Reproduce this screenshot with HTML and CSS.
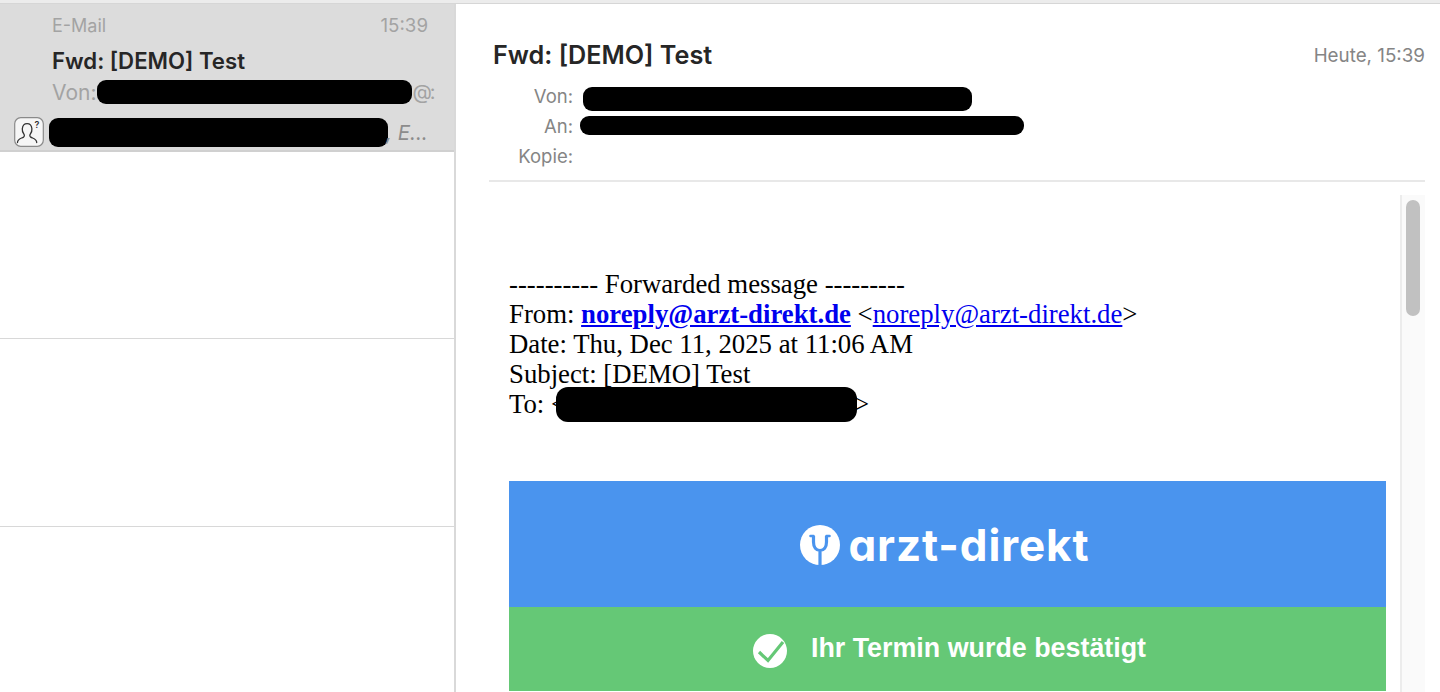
FILE: index.html
```html
<!DOCTYPE html>
<html lang="de">
<head>
  <meta charset="UTF-8" />
  <title>E-Mail</title>
  <link rel="stylesheet" href="styles.css">
</head>
<body>
<div class="top-strip"></div>
<div class="app">
  <!-- Message list -->
  <aside class="list">
    <div class="row selected">
      <div class="row-head"><span>E-Mail</span><span class="row-time">15:39</span></div>
      <div class="row-subject">Fwd: [DEMO] Test</div>
      <div class="row-from">
        <span>Von:</span><span class="black from-bar"></span><span class="row-at">@:</span>
      </div>
      <div class="row-preview">
        <svg class="contact-icon" viewBox="0 0 30 30">
          <rect x="0.7" y="0.7" width="28.6" height="28.6" rx="6" fill="#f6f6f6" stroke="#8a8a8a" stroke-width="1.2"/>
          <path d="M3.500 25.500c0-3.600 3.600-4 6-5.400 1-.6 1.100-2 .4-3-1.200-1.600-1.800-3.400-1.600-5.400.3-2.900 2.200-5 4.800-5s4.500 2.100 4.800 5c.2 2-.4 3.800-1.600 5.400-.7 1-.6 2.400.4 3 2.400 1.400 6 1.800 6 5.400" fill="none" stroke="#333" stroke-width="1.300" stroke-linecap="round"/>
          <text x="20.500" y="11" class="contact-mark">?</text>
        </svg>
        <span class="black preview-bar"></span>
        <span class="row-excerpt">, E...</span>
      </div>
    </div>
    <div class="row empty"></div>
    <div class="row empty"></div>
  </aside>

  <!-- Reading pane -->
  <main class="pane">
    <header class="mail-head">
      <div class="title-line">
        <h1>Fwd: [DEMO] Test</h1>
        <span class="mail-date">Heute, 15:39</span>
      </div>
      <div class="field"><span class="label">Von:</span><span class="black von-bar"></span></div>
      <div class="field"><span class="label">An:</span><span class="black an-bar"></span></div>
      <div class="field"><span class="label">Kopie:</span></div>
    </header>

    <div class="mail-scroll">
      <div class="mail-body">
        <div class="fwd">
          <div>---------- Forwarded message ---------</div>
          <div>From: <a href="#"><b>noreply@arzt-direkt.de</b></a> &lt;<a href="#">noreply@arzt-direkt.de</a>&gt;</div>
          <div>Date: Thu, Dec 11, 2025 at 11:06 AM</div>
          <div>Subject: [DEMO] Test</div>
          <div class="to-line">To: &lt;<span class="black to-bar"></span>&gt;</div>
        </div>

        <div class="brand">
          <svg class="brand-icon" viewBox="0 0 40 40">
            <circle cx="20" cy="20" r="20" fill="#fff"/>
            <path d="M13.500 11v6c0 5.500 2.800 8.500 6.500 8.500s6.500-3 6.500-8.500v-6M20 25.500V40" fill="none" stroke="#4a94ee" stroke-width="3.200"/>
            <path d="M10.500 11h3M26.500 11h3" fill="none" stroke="#4a94ee" stroke-width="2.600" stroke-linecap="round"/>
          </svg>
          <span class="brand-name">arzt-direkt</span>
        </div>
        <div class="confirm">
          <svg class="confirm-icon" viewBox="0 0 34 34">
            <circle cx="17" cy="17" r="17" fill="#fff"/>
            <path d="M6 18l9 8.500L30 8" fill="none" stroke="#65c876" stroke-width="3.200"/>
          </svg>
          <span class="confirm-text">Ihr Termin wurde bestätigt</span>
        </div>
      </div>
      <div class="scrollbar"><div class="thumb"></div></div>
    </div>
  </main>
</div>
</body>
</html>
```

FILE: styles.css
```css
* { box-sizing: border-box; }
html, body { height: 100%; }
body {
  margin: 0;
  height: 692px;
  overflow: hidden;
  background: #fff;
  font-family: 'Inter', 'Liberation Sans', sans-serif;
  color: #262626;
}
.top-strip {
  height: 4px;
  background: #ececec;
  border-bottom: 1px solid #d6d6d6;
}
.app { display: flex; height: 688px; }
.black { display: inline-block; background: #000; }

/* message list */
.list {
  width: 456px;
  flex: none;
  border-right: 2px solid #d9d9d9;
}
.row { border-bottom: 1px solid #d8d8d8; }
.row.empty { height: 187.250px; }
.row.selected {
  height: 148px;
  background: #dcdcdc;
  border-bottom: 2px solid #d0d0d0;
  padding: 10px 26px 0 52px;
  color: #a3a3a3;
  font-size: 18px;
}
.row-head {
  display: flex;
  justify-content: space-between;
  line-height: 24px;
}
.row-time { font-size: 18.700px; }
.row-subject {
  margin-top: 9px;
  line-height: 28px;
  font-size: 22.200px;
  font-weight: 600;
  color: #262626;
}
.row-from {
  display: flex;
  align-items: center;
  height: 26px;
  margin-top: 4px;
  font-size: 21px;
  white-space: nowrap;
}
.from-bar { width: 315px; height: 24px; margin-left: 1px; border-radius: 9px; flex: none; }
.row-at { font-size: 20px; letter-spacing: -2px; }
.row-preview {
  display: flex;
  align-items: center;
  margin: 12px 0 0 -38px;
}
.contact-icon { width: 30px; height: 30px; flex: none; }
.contact-mark { font-size: 9px; font-weight: 600; fill: #333; }
.preview-bar {
  width: 339px;
  height: 29px;
  margin-left: 5px;
  border-radius: 9px;
  flex: none;
}
.row-excerpt {
  margin-left: -2px;
  font-size: 20.500px;
  font-style: italic;
  color: #8c8c8c;
  white-space: nowrap;
}

/* reading pane */
.pane { flex: 1; min-width: 0; padding: 0 15px 0 33px; }
.mail-head {
  height: 178px;
  border-bottom: 2px solid #e8e8e8;
  padding: 33px 0 0 0;
}
.title-line {
  display: flex;
  justify-content: space-between;
  align-items: center;
  padding-left: 4px;
  height: 36px;
  margin-bottom: 8px;
}
h1 { margin: 0; font-size: 25.200px; font-weight: 600; }
.mail-date { font-size: 18.800px; color: #858585; }
.field { display: flex; align-items: center; height: 30px; }
.label {
  width: 84px;
  flex: none;
  text-align: right;
  font-size: 18.500px;
  color: #858585;
}
.von-bar { width: 389px; height: 24px; margin: 6px 0 0 10px; border-radius: 9px; }
.an-bar { width: 444px; height: 19px; margin: 0 0 2px 7px; border-radius: 9px; }

.mail-scroll { display: flex; margin-top: 13px; height: 497px; overflow: hidden; }
.mail-body { flex: 1; min-width: 0; padding: 74px 14px 0 20px; }
.fwd {
  font-family: 'Liberation Serif', serif;
  font-size: 26.750px;
  line-height: 30px;
  color: #000;
  white-space: nowrap;
}
.fwd a { color: #0000ee; }
.to-line { display: flex; align-items: center; height: 30px; }
.to-bar { width: 301px; height: 35px; margin: 0 -3px 0 -10px; border-radius: 12px; position: relative; }
.brand {
  height: 126px;
  margin-top: 62px;
  padding: 2px 5px 0 0;
  background: #4a94ee;
  display: flex;
  align-items: center;
  justify-content: center;
  gap: 8px;
  color: #fff;
}
.brand-icon { width: 40px; height: 40px; flex: none; }
.brand-name {
  font-family: 'Inter', sans-serif;
  font-size: 44px;
  font-weight: 700;
  font-feature-settings: 'cv11';
  letter-spacing: .9px;
}
.confirm {
  height: 84px;
  background: #65c876;
  display: flex;
  align-items: center;
  justify-content: center;
  gap: 24px;
  padding-left: 4px;
  color: #fff;
  font-family: 'Liberation Sans', sans-serif;
  font-size: 26.850px;
  font-weight: 700;
}
.confirm-icon { width: 34px; height: 34px; flex: none; margin-top: 4px; }
.confirm-text { padding-bottom: 2px; }
.scrollbar {
  width: 25px;
  flex: none;
  background: #fafafa;
  border-left: 2px solid #ececec;
  padding: 5px 0 0 4px;
}
.thumb { width: 14px; height: 116px; border-radius: 7px; background: #c1c1c1; }
```
